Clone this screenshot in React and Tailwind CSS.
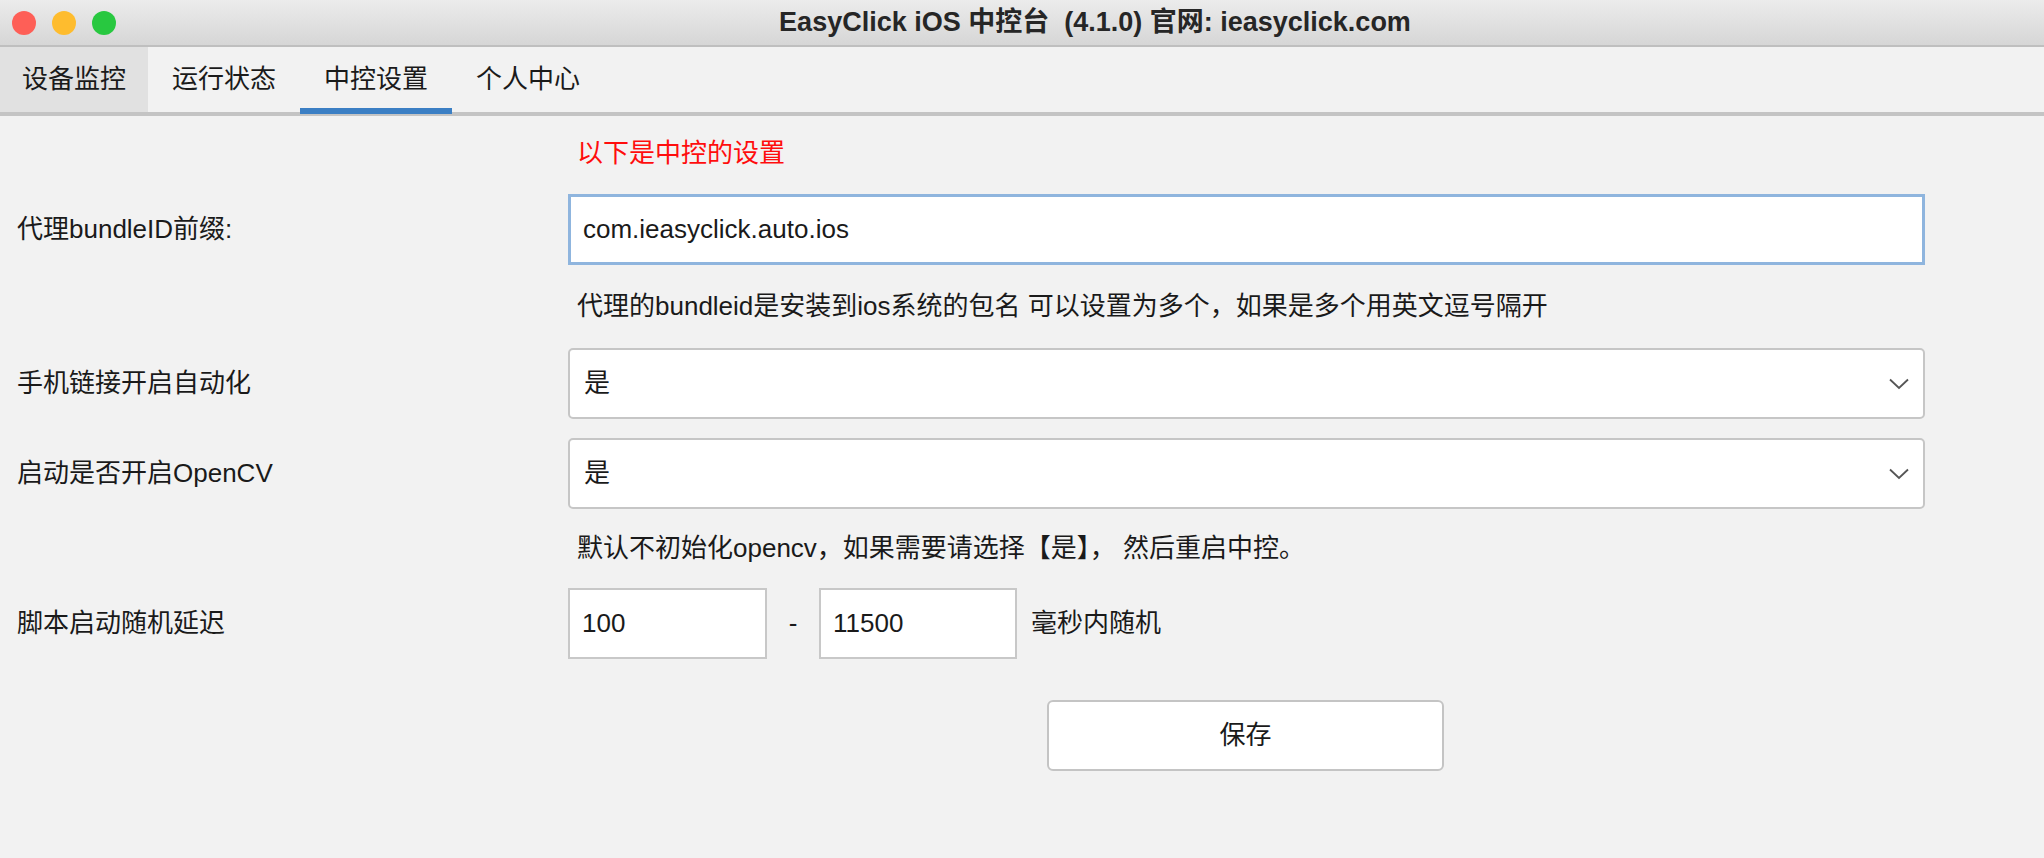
import { useState } from 'react'

const FONT = { fontFamily: '"Liberation Sans", "Noto Sans CJK SC", sans-serif' }

const tabs = ['设备监控', '运行状态', '中控设置', '个人中心']

function Chevron() {
  return (
    <svg width="20" height="12" viewBox="0 0 20 12" fill="none">
      <path d="M1 1.5 L10 10 L19 1.5" stroke="#555" strokeWidth="1.8" />
    </svg>
  )
}

function SelectBox({ value }) {
  return (
    <div className="flex h-[71px] items-center justify-between rounded-[5px] border-2 border-[#c6c6c6] bg-white pl-[14px] pr-[14px]">
      <span>{value}</span>
      <Chevron />
    </div>
  )
}

function Row({ label, children, className = '' }) {
  return (
    <div className={`grid grid-cols-[568px_1fr] items-center ${className}`}>
      <div className="pl-[17px]">{label}</div>
      <div>{children}</div>
    </div>
  )
}

export default function App() {
  const [active, setActive] = useState(2)

  return (
    <div
      className="flex h-[858px] w-[2044px] flex-col overflow-hidden bg-[#f2f2f2] text-[26px] text-[#1a1a1a]"
      style={FONT}
    >
      {/* title bar */}
      <div className="relative flex h-[47px] items-center border-b-2 border-[#bfbfbf] bg-gradient-to-b from-[#ececec] to-[#d6d6d6]">
        <div className="flex gap-[16px] pl-[12px]">
          <span className="h-[24px] w-[24px] rounded-full bg-[#fe5f57]" />
          <span className="h-[24px] w-[24px] rounded-full bg-[#febc2e]" />
          <span className="h-[24px] w-[24px] rounded-full bg-[#28c840]" />
        </div>
        <div className="flex-1 pl-[30px] text-center text-[27px] font-bold text-[#262626]">
          EasyClick iOS 中控台&nbsp;&nbsp;(4.1.0) 官网: ieasyclick.com
        </div>
      </div>

      {/* tabs */}
      <div className="flex h-[69px] border-b-4 border-[#c4c4c4]">
        {tabs.map((t, i) => (
          <button
            key={t}
            onClick={() => setActive(i)}
            className={`relative flex items-center justify-center ${i === 0 ? 'w-[148px] bg-[#e1e1e1]' : 'w-[152px]'}`}
          >
            {t}
            {i === active && (
              <span className="absolute bottom-[-2px] left-0 right-0 h-[6px] bg-[#3b7fc4]" />
            )}
          </button>
        ))}
      </div>

      {/* settings */}
      <div className="flex flex-col pr-[119px]">
        <Row label="" className="h-[74px]">
          <span className="pl-[9px] text-[#ff0d0d]">以下是中控的设置</span>
        </Row>

        <Row label="代理bundleID前缀:" className="mt-[4px]">
          <div className="flex h-[71px] items-center border-[3px] border-[#8fb5de] bg-white pl-[12px]">
            com.ieasyclick.auto.ios
          </div>
        </Row>

        <Row label="" className="h-[83px]">
          <span className="pl-[9px]">代理的bundleid是安装到ios系统的包名 可以设置为多个，如果是多个用英文逗号隔开</span>
        </Row>

        <Row label="手机链接开启自动化">
          <SelectBox value="是" />
        </Row>

        <Row label="启动是否开启OpenCV" className="mt-[19px]">
          <SelectBox value="是" />
        </Row>

        <Row label="" className="h-[79px]">
          <span className="pl-[9px]">默认不初始化opencv，如果需要请选择【是】， 然后重启中控。</span>
        </Row>

        <Row label="脚本启动随机延迟">
          <div className="flex items-center">
            <div className="flex h-[71px] w-[199px] items-center border-2 border-[#c8c8c8] bg-white pl-[12px]">100</div>
            <span className="w-[52px] text-center">-</span>
            <div className="flex h-[71px] w-[198px] items-center border-2 border-[#c8c8c8] bg-white pl-[12px]">11500</div>
            <span className="pl-[14px]">毫秒内随机</span>
          </div>
        </Row>

        <div className="mt-[41px] pl-[1047px]">
          <button className="flex h-[71px] w-[397px] items-center justify-center rounded-[6px] border-2 border-[#c4c4c4] bg-white">
            保存
          </button>
        </div>
      </div>
    </div>
  )
}
